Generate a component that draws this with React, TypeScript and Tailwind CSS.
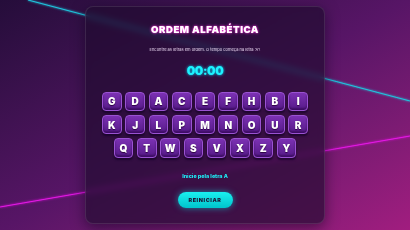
const rows = [
  ['G', 'D', 'A', 'C', 'E', 'F', 'H', 'B', 'I'],
  ['K', 'J', 'L', 'P', 'M', 'N', 'O', 'U', 'R'],
  ['Q', 'T', 'W', 'S', 'V', 'X', 'Z', 'Y'],
]

function LetterKey({ letter }: { letter: string }) {
  return (
    <button className="w-[19.7px] h-[19.5px] rounded-[4px] border border-[#9a52d2] bg-gradient-to-b from-[#7c31b4] to-[#561a88] shadow-[0_2px_2px_rgba(20,0,40,0.7),inset_0_-2px_2px_rgba(40,0,70,0.55)] flex items-center justify-center text-white text-[10px] font-black leading-none [text-shadow:0_1px_1px_rgba(40,0,60,0.95)]">
      {letter}
    </button>
  )
}

function Background() {
  return (
    <svg className="absolute inset-0 w-full h-full" viewBox="0 0 410 230" preserveAspectRatio="none">
      <defs>
        <filter id="glow" x="-10%" y="-50%" width="120%" height="200%">
          <feGaussianBlur stdDeviation="1.2" result="b" />
          <feMerge>
            <feMergeNode in="b" />
            <feMergeNode in="SourceGraphic" />
          </feMerge>
        </filter>
      </defs>
      <line x1="28" y1="0" x2="410" y2="101" stroke="#1fc6de" strokeWidth="1.2" filter="url(#glow)" />
      <line x1="0" y1="207" x2="410" y2="136" stroke="#e516e6" strokeWidth="1.2" filter="url(#glow)" />
    </svg>
  )
}

export default function App() {
  return (
    <div className="relative w-full h-screen overflow-hidden bg-gradient-to-br from-[#250d3a] via-[#571566] to-[#a11d7f] font-['Inter','Open_Sans',sans-serif]">
      <Background />
      <div className="relative flex justify-center pt-[6px]">
        <div className="w-[240px] h-[218px] rounded-[8px] border border-white/10 bg-[#1e0a2e]/65 backdrop-blur-[3px] shadow-[0_4px_14px_rgba(10,0,25,0.5)] flex flex-col items-center pt-[16px]">
          <h1 className="text-[9.6px] leading-[14px] font-black tracking-[0.55px] text-white [text-shadow:0_0_1px_#ff38e0,0_0_3px_#ff38e0]">
            ORDEM ALFABÉTICA
          </h1>
          <p className="mt-[10px] text-[4px] leading-[6px] text-[#e8d6f0]">
            Encontre as letras em ordem. O tempo começa na letra 'A'!
          </p>
          <div className="mt-[10px] text-[12px] leading-[16px] font-black tracking-[-0.4px] text-[#1ef2ff] [text-shadow:0_0_3px_#00e5ff]">
            00:00
          </div>
          <div className="mt-[12.7px] flex flex-col gap-[3.8px] items-center">
            {rows.map((row, i) => (
              <div key={i} className="flex gap-[3.6px]">
                {row.map((l) => (
                  <LetterKey key={l} letter={l} />
                ))}
              </div>
            ))}
          </div>
          <p className="mt-[14px] text-[5.4px] leading-[8px] font-extrabold text-[#1ee6f0]">Inicie pela letra A</p>
          <button className="mt-[12px] w-[55px] h-[16px] rounded-full bg-gradient-to-b from-[#19f0f0] to-[#00c4cc] shadow-[0_0_6px_rgba(0,230,240,0.55)] text-[5.4px] font-black tracking-[0.6px] text-[#1a1636]">
            REINICIAR
          </button>
        </div>
      </div>
    </div>
  )
}
